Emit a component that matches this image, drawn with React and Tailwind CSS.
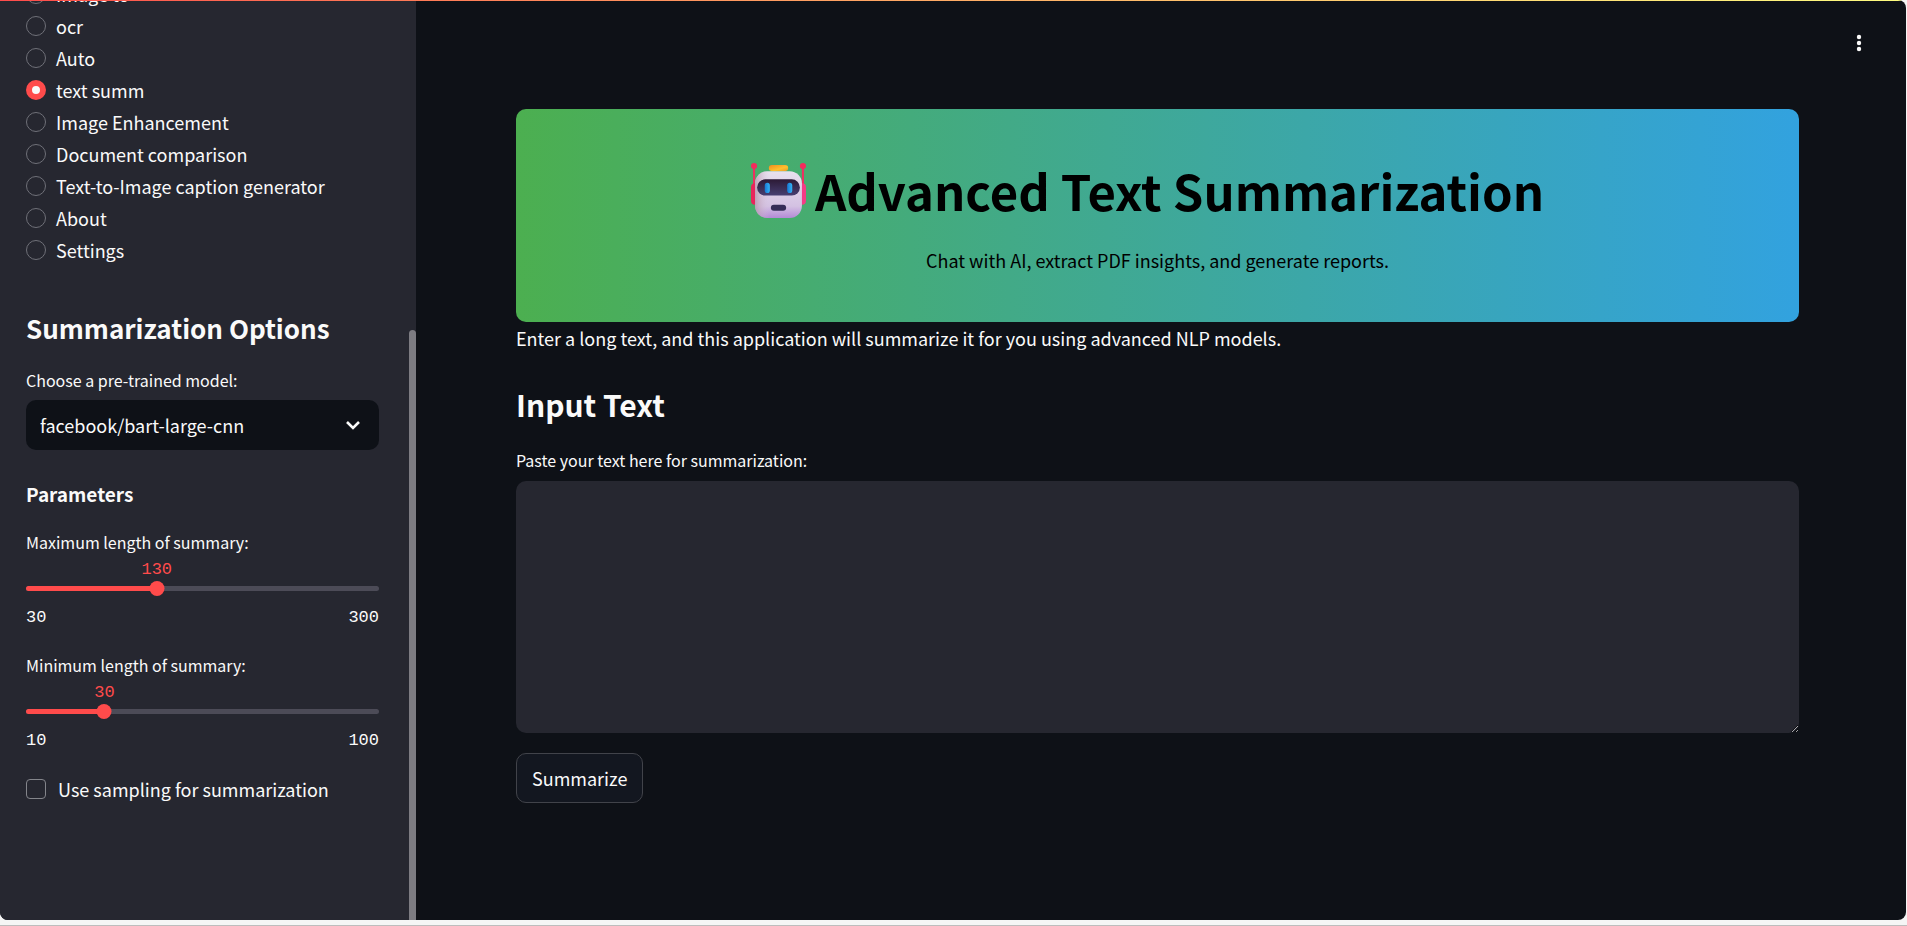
import { useState } from "react";

const pages = [
  "Image to",
  "ocr",
  "Auto",
  "text summ",
  "Image Enhancement",
  "Document comparison",
  "Text-to-Image caption generator",
  "About",
  "Settings",
];

function Robot() {
  return (
    <svg viewBox="0 0 54 54" className="size-[55px] shrink-0" role="img" aria-label="Robot">
      <defs>
        <linearGradient id="face" x1="0" y1="0" x2="0" y2="1">
          <stop offset="0" stopColor="#e9e1ee" />
          <stop offset="0.75" stopColor="#d3c1e2" />
          <stop offset="1" stopColor="#b48ad6" />
        </linearGradient>
        <linearGradient id="shade" x1="0" y1="0" x2="1" y2="0">
          <stop offset="0" stopColor="#b795ab" stopOpacity="0.8" />
          <stop offset="0.3" stopColor="#d8c6dc" stopOpacity="0" />
        </linearGradient>
        <linearGradient id="visor" x1="0" y1="0" x2="0" y2="1">
          <stop offset="0" stopColor="#2c1a35" />
          <stop offset="1" stopColor="#473f72" />
        </linearGradient>
        <linearGradient id="eye" x1="0" y1="0" x2="1" y2="0">
          <stop offset="0" stopColor="#1777d2" />
          <stop offset="1" stopColor="#35b4f6" />
        </linearGradient>
        <linearGradient id="cap" x1="0" y1="0" x2="1" y2="1">
          <stop offset="0" stopColor="#f08c1f" />
          <stop offset="0.6" stopColor="#ffc02e" />
          <stop offset="1" stopColor="#e99a26" />
        </linearGradient>
      </defs>
      <rect x="2" y="3" width="2" height="22" fill="#ee2f62" />
      <rect x="50" y="3" width="2" height="22" fill="#ee2f62" />
      <circle cx="3" cy="3" r="3" fill="#f52a5c" />
      <circle cx="51" cy="3" r="3" fill="#f52a5c" />
      <rect x="0" y="20" width="8" height="21" rx="4" fill="#e8255c" />
      <rect x="46" y="20" width="8" height="21" rx="4" fill="#f43c86" />
      <rect x="17.5" y="2" width="19" height="6" rx="3" fill="url(#cap)" />
      <rect x="4" y="8" width="46" height="46" rx="12" fill="url(#face)" />
      <rect x="4" y="8" width="46" height="46" rx="12" fill="url(#shade)" />
      <rect x="6" y="16" width="42" height="16" rx="8" fill="url(#visor)" />
      <rect x="13.5" y="19.5" width="5" height="10" rx="2.5" fill="url(#eye)" />
      <rect x="35.5" y="19.5" width="5" height="10" rx="2.5" fill="url(#eye)" />
      <rect x="19.5" y="41" width="15" height="6" rx="3" fill="#352c57" />
    </svg>
  );
}

function Slider({ id, label, min, max, value, onChange }) {
  const share = ((value - min) / (max - min)) * 100;
  return (
    <div>
      <label htmlFor={id} className="block text-[16px] leading-6">{label}</label>
      <div className="relative mt-1 h-12">
        <output
          htmlFor={id}
          className="absolute top-0 -translate-x-1/2 font-['Liberation_Mono',monospace] text-[17px] leading-6 text-[#ff4b4b]"
          style={{ left: `${share}%` }}
        >
          {value}
        </output>
        <div className="absolute inset-x-0 top-[28px] h-[5px] rounded-full bg-[#4c4b57]">
          <div className="h-full rounded-full bg-[#ff4b4b]" style={{ width: `${share}%` }} />
        </div>
        <div
          className="absolute top-[23px] size-[15px] -translate-x-1/2 rounded-full bg-[#ff4b4b]"
          style={{ left: `${share}%` }}
        />
        <input
          id={id}
          type="range"
          min={min}
          max={max}
          value={value}
          onChange={(e) => onChange(Number(e.target.value))}
          className="absolute inset-x-0 top-5 h-5 w-full cursor-pointer opacity-0"
        />
      </div>
      <div className="flex justify-between font-['Liberation_Mono',monospace] text-[17px] leading-6">
        <span>{min}</span>
        <span>{max}</span>
      </div>
    </div>
  );
}

export default function App() {
  const [page, setPage] = useState("text summ");
  const [maxLength, setMaxLength] = useState(130);
  const [minLength, setMinLength] = useState(30);
  const [sampling, setSampling] = useState(false);

  return (
    <div className="flex h-screen flex-col border-b border-[#bdbdbd] bg-[#f5f5f5] pr-px pb-[5px] font-['Noto_Sans_CJK_SC',sans-serif] text-[18px] text-[#fafafa]">
      <div className="flex min-h-0 flex-1 flex-col overflow-hidden rounded-tr-lg rounded-b-lg bg-[#0e1117]">
        <div className="h-px shrink-0 bg-linear-to-r from-[#ff4b4b] to-[#fffd80]" />
        <div className="flex min-h-0 flex-1">
          <aside className="flex w-[416px] shrink-0 overflow-hidden bg-[#262730]">
            <div className="flex flex-1 flex-col justify-end pr-[30px] pb-[115px] pl-[26px]">
              <fieldset className="flex flex-col">
                {pages.map((name) => (
                  <label key={name} className="flex h-8 cursor-pointer items-center gap-[10px] leading-8">
                    <input
                      type="radio"
                      name="page"
                      checked={page === name}
                      onChange={() => setPage(name)}
                      className="size-5 shrink-0 appearance-none rounded-full border border-[#6f7078] checked:border-[6px] checked:border-[#ff4b4b] checked:bg-[#fafafa]"
                    />
                    {name}
                  </label>
                ))}
              </fieldset>
              <h2 className="mt-11 text-[26px] leading-9 font-bold">Summarization Options</h2>
              <label htmlFor="model" className="mt-[22px] text-[16px] leading-6">Choose a pre-trained model:</label>
              <div className="relative mt-2">
                <select id="model" className="h-[50px] w-full appearance-none rounded-[10px] bg-[#0e1117] px-[14px]">
                  <option>facebook/bart-large-cnn</option>
                </select>
                <svg viewBox="0 0 14 10" className="pointer-events-none absolute top-5 right-[19px] h-[10px] w-[14px]" fill="none" stroke="currentColor" strokeWidth="2.6">
                  <path d="M1 2 L7 8 L13 2" />
                </svg>
              </div>
              <h3 className="mt-7 text-[19px] leading-8 font-bold">Parameters</h3>
              <div className="mt-5 flex flex-col gap-[23px]">
                <Slider id="max-length" label="Maximum length of summary:" min={30} max={300} value={maxLength} onChange={setMaxLength} />
                <Slider id="min-length" label="Minimum length of summary:" min={10} max={100} value={minLength} onChange={setMinLength} />
              </div>
              <label className="mt-5 flex cursor-pointer items-center gap-3 leading-8">
                <input
                  type="checkbox"
                  checked={sampling}
                  onChange={(e) => setSampling(e.target.checked)}
                  className="size-5 shrink-0 appearance-none rounded border border-[#84858b] checked:bg-[#ff4b4b]"
                />
                Use sampling for summarization
              </label>
            </div>
            <div className="mt-[329px] w-[7px] shrink-0 rounded-t bg-[#7d7c82]" />
          </aside>
          <main className="min-w-0 flex-1">
            <header className="flex h-[108px] justify-end pt-[27px] pr-8">
              <button type="button" aria-label="Main menu" className="flex size-[30px] items-center justify-center">
                <svg viewBox="0 0 6 18" className="h-[18px] w-[6px]" fill="currentColor">
                  <circle cx="3" cy="3" r="2.2" />
                  <circle cx="3" cy="9" r="2.2" />
                  <circle cx="3" cy="15" r="2.2" />
                </svg>
              </button>
            </header>
            <div className="pr-[107px] pl-[100px]">
              <section className="rounded-[10px] bg-linear-to-r/srgb from-[#4caf50] to-[#32a2df] px-5 pt-12 pb-[46px] text-center text-black">
                <h1 className="flex items-center justify-center gap-[9px] pr-5 text-[49px] leading-[66px] font-bold">
                  <Robot />
                  Advanced Text Summarization
                </h1>
                <p className="mt-[21px] leading-8">Chat with AI, extract PDF insights, and generate reports.</p>
              </section>
              <p className="leading-8">Enter a long text, and this application will summarize it for you using advanced NLP models.</p>
              <h2 className="mt-[26px] text-[30px] leading-[48px] font-bold">Input Text</h2>
              <label htmlFor="source" className="mt-5 block text-[16px] leading-6">Paste your text here for summarization:</label>
              <textarea id="source" className="mt-[9px] block h-[252px] w-full resize-y rounded-[10px] bg-[#262730] p-4 outline-none" />
              <button type="button" className="mt-5 h-[50px] rounded-[10px] border border-[#41434a] bg-[#131720] px-[15px]">Summarize</button>
            </div>
          </main>
        </div>
      </div>
    </div>
  );
}
